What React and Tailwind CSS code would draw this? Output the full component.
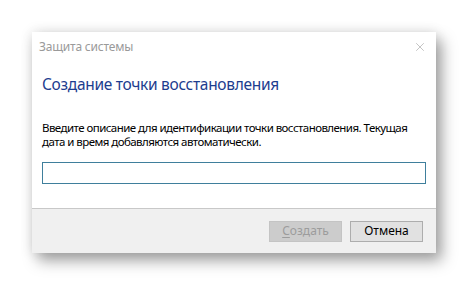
import { X } from "lucide-react";

function App() {
  return (
    <div className="w-[468px] h-[286px] bg-white pt-[32px] pl-[32px]" style={{ fontFamily: "'Noto Sans', 'Open Sans', sans-serif" }}>
      <div className="w-[404px] h-[221px] bg-white flex flex-col shadow-[6px_8px_14px_rgba(0,0,0,0.35),0_0_12px_rgba(0,0,0,0.12)]">
        <div className="h-[30px] flex items-center justify-between pl-[7px] pr-[9px]">
          <span className="text-[12px] text-[#9a9a9a] tracking-[-0.2px]">Защита системы</span>
          <X size={14} strokeWidth={1} className="text-[#9a9a9a]" />
        </div>
        <div className="flex-1 px-[10px]">
          <div className="mt-[11px] text-[15.5px] leading-[22px] text-[#1d3d8f] tracking-[-0.3px] whitespace-nowrap">
            Создание точки восстановления
          </div>
          <div className="mt-[26px] text-[11.5px] leading-[14px] text-black tracking-[-0.55px] whitespace-nowrap">
            Введите описание для идентификации точки восстановления. Текущая
            <br />
            дата и время добавляются автоматически.
          </div>
          <input
            type="text"
            className="mt-[13px] w-[384px] h-[22px] border border-[#3f7f9c] bg-white outline-none"
          />
        </div>
        <div className="h-[45px] bg-[#f0f0f0] border-t border-[#c8c8c8] flex items-center justify-end gap-[8px] pr-[13px]">
          <button className="w-[73px] h-[21px] bg-[#cccccc] border border-[#c4c4c4] text-[12px] text-[#9c9c9c]">
            <span className="underline underline-offset-2">С</span>оздать
          </button>
          <button className="w-[73px] h-[21px] bg-[#e1e1e1] border border-[#adadad] text-[12px] text-black">
            Отмена
          </button>
        </div>
      </div>
    </div>
  );
}

export default App;
